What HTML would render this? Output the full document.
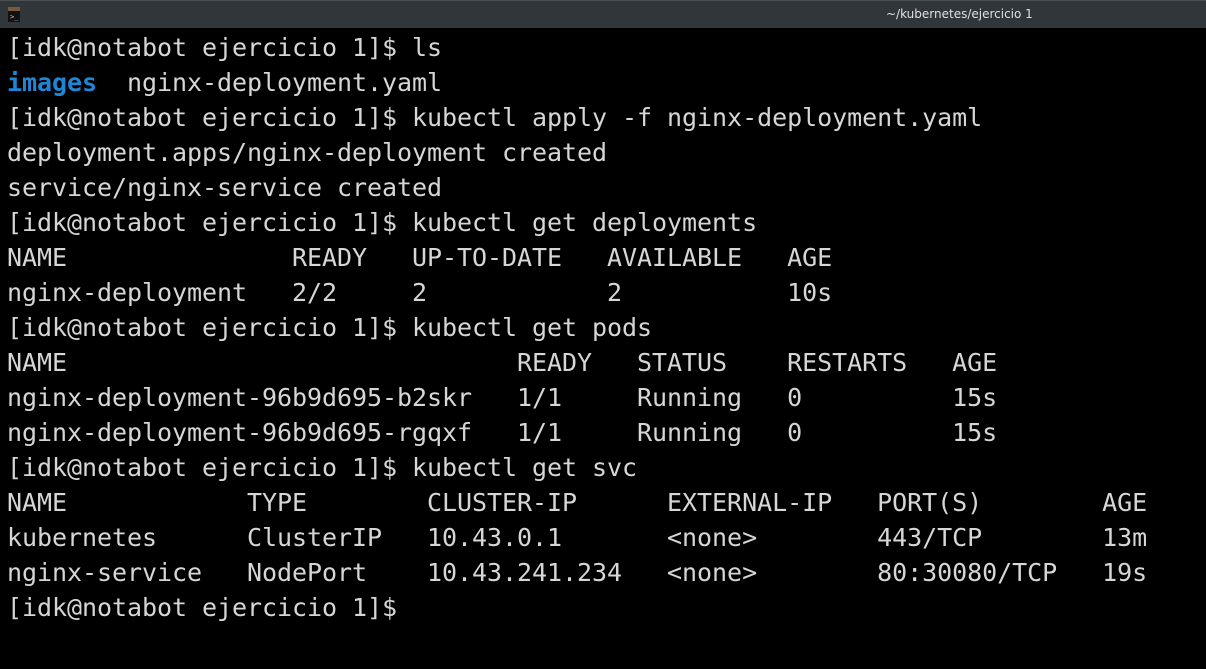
<!DOCTYPE html>
<html><head><meta charset="utf-8"><style>
html,body{margin:0;padding:0;background:#000;width:1206px;height:669px;overflow:hidden}
#tb{position:absolute;left:0;top:0;width:1206px;height:28px;background:#31363b;border-top:1px solid #4a4f54;box-sizing:border-box}
#tt{position:absolute;left:886px;top:6px;font:12px "DejaVu Sans","Liberation Sans",sans-serif;color:#e0e0e0}
#ic{position:absolute;left:8px;top:6px;width:12px;height:15px;background:#111;border-top:4px solid #7a5a3a;box-sizing:border-box}
#ic span{position:absolute;left:2px;top:2px;color:#ccc;font:7px monospace}
pre{position:absolute;left:7px;top:30px;margin:0;font:25px/35px "DejaVu Sans Mono","Liberation Mono",monospace;color:#d6d6d6;letter-spacing:-0.05px}
b{color:#1f86d6;font-weight:bold}
</style></head><body>
<div id="tb"><div id="ic"><span>&gt;_</span></div><div id="tt">~/kubernetes/ejercicio 1</div></div>
<pre>[idk@notabot ejercicio 1]$ ls
<b>images</b>  nginx-deployment.yaml
[idk@notabot ejercicio 1]$ kubectl apply -f nginx-deployment.yaml
deployment.apps/nginx-deployment created
service/nginx-service created
[idk@notabot ejercicio 1]$ kubectl get deployments
NAME               READY   UP-TO-DATE   AVAILABLE   AGE
nginx-deployment   2/2     2            2           10s
[idk@notabot ejercicio 1]$ kubectl get pods
NAME                              READY   STATUS    RESTARTS   AGE
nginx-deployment-96b9d695-b2skr   1/1     Running   0          15s
nginx-deployment-96b9d695-rgqxf   1/1     Running   0          15s
[idk@notabot ejercicio 1]$ kubectl get svc
NAME            TYPE        CLUSTER-IP      EXTERNAL-IP   PORT(S)        AGE
kubernetes      ClusterIP   10.43.0.1       &lt;none&gt;        443/TCP        13m
nginx-service   NodePort    10.43.241.234   &lt;none&gt;        80:30080/TCP   19s
[idk@notabot ejercicio 1]$ </pre>
</body></html>
